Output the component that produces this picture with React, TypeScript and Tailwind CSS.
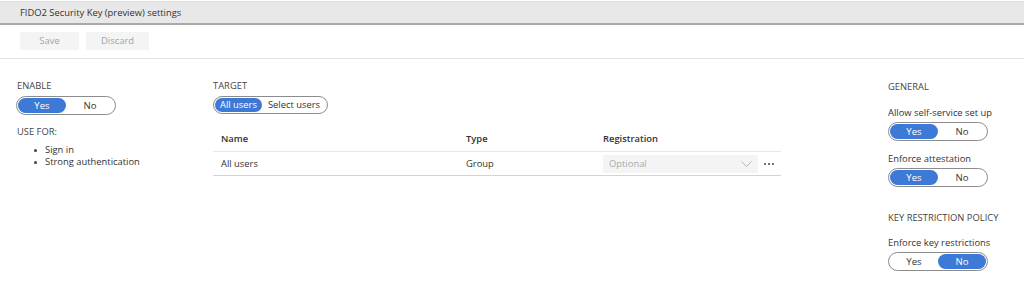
import React from "react";

function YesNo({ yes }: { yes: boolean }) {
  return (
    <div className="flex h-[19px] w-[100px] items-stretch rounded-full border border-[#8c8c8c] p-[1px] text-[9.6px] leading-none">
      <div
        className={
          yes
            ? "flex flex-1 items-center justify-center rounded-full bg-[#3d79d6] text-white"
            : "flex flex-1 items-center justify-center rounded-full text-[#333]"
        }
      >
        Yes
      </div>
      <div
        className={
          !yes
            ? "flex flex-1 items-center justify-center rounded-full bg-[#3d79d6] text-white"
            : "flex flex-1 items-center justify-center rounded-full text-[#333]"
        }
      >
        No
      </div>
    </div>
  );
}

export default function App() {
  return (
    <div className="h-[281px] w-[1024px] overflow-hidden bg-white font-['Open_Sans',sans-serif] text-[9.4px] leading-[12px] text-[#333]">
      {/* header */}
      <div className="mt-[1px] flex h-[24px] items-center border-t border-b-2 border-t-[#dcdcdc] border-b-[#a9a9a9] bg-[#e8e8e8] pl-[20px] text-[9.4px] text-[#333]">
        FIDO2 Security Key (preview) settings
      </div>
      {/* toolbar */}
      <div className="flex gap-[7px] pl-[20px] pt-[7px]">
        <div className="flex h-[18px] w-[59px] items-center justify-center bg-[#f4f4f4] text-[#a3a3a3]">Save</div>
        <div className="flex h-[18px] w-[63px] items-center justify-center bg-[#f4f4f4] text-[#a3a3a3]">Discard</div>
      </div>
      <div className="mt-[8px] h-px bg-[#e3e3e3]" />

      <div className="grid grid-cols-[213px_568px_1fr] pt-[21px]">
        {/* left */}
        <div className="pl-[17px]">
          <div className="text-[#444]">ENABLE</div>
          <div className="mt-[4px] -ml-[1px]">
            <YesNo yes />
          </div>
          <div className="mt-[11px] text-[#444]">USE FOR:</div>
          <ul className="mt-[6px]">
            <li className="flex items-center">
              <span className="ml-[17px] mr-[8px] h-[3px] w-[3px] rounded-full bg-[#444]" />
              Sign in
            </li>
            <li className="flex items-center">
              <span className="ml-[17px] mr-[8px] h-[3px] w-[3px] rounded-full bg-[#444]" />
              Strong authentication
            </li>
          </ul>
        </div>

        {/* middle */}
        <div>
          <div className="text-[#444]">TARGET</div>
          <div className="mt-[4px] inline-flex h-[18px] items-stretch rounded-full border border-[#8c8c8c] p-[1px] leading-none">
            <div className="flex items-center rounded-full bg-[#3d79d6] px-[5px] text-white">All users</div>
            <div className="flex items-center px-[6px] text-[#333]">Select users</div>
          </div>
          <div className="mt-[13px] grid h-[25px] grid-cols-[253px_137px_1fr] items-center border-b border-[#e8e8e8] font-semibold">
            <div className="pl-[8px]">Name</div>
            <div>Type</div>
            <div>Registration</div>
          </div>
          <div className="grid h-[24px] grid-cols-[253px_137px_1fr] items-center border-b border-[#d4d4d4]">
            <div className="pl-[8px]">All users</div>
            <div>Group</div>
            <div className="flex items-center">
              <div className="flex h-[18px] w-[155px] items-center justify-between bg-[#f4f4f4] pl-[6px] pr-[6px] text-[#a9a9a9]">
                <span>Optional</span>
                <svg width="11" height="6" viewBox="0 0 11 6" fill="none">
                  <path d="M0.5 0.5 L5.5 5.5 L10.5 0.5" stroke="#b5b5b5" strokeWidth="1" />
                </svg>
              </div>
              <div className="ml-[6px] flex gap-[2px]">
                <span className="h-[2px] w-[2px] rounded-full bg-[#444]" />
                <span className="h-[2px] w-[2px] rounded-full bg-[#444]" />
                <span className="h-[2px] w-[2px] rounded-full bg-[#444]" />
              </div>
            </div>
          </div>
        </div>

        {/* right */}
        <div className="pl-[107px]">
          <div className="mt-[1px] text-[#444]">GENERAL</div>
          <div className="mt-[14px]">Allow self-service set up</div>
          <div className="mt-[3px]">
            <YesNo yes />
          </div>
          <div className="mt-[12px]">Enforce attestation</div>
          <div className="mt-[3px]">
            <YesNo yes />
          </div>
          <div className="mt-[25px] text-[#444]">KEY RESTRICTION POLICY</div>
          <div className="mt-[13px]">Enforce key restrictions</div>
          <div className="mt-[3px]">
            <YesNo yes={false} />
          </div>
        </div>
      </div>
    </div>
  );
}
